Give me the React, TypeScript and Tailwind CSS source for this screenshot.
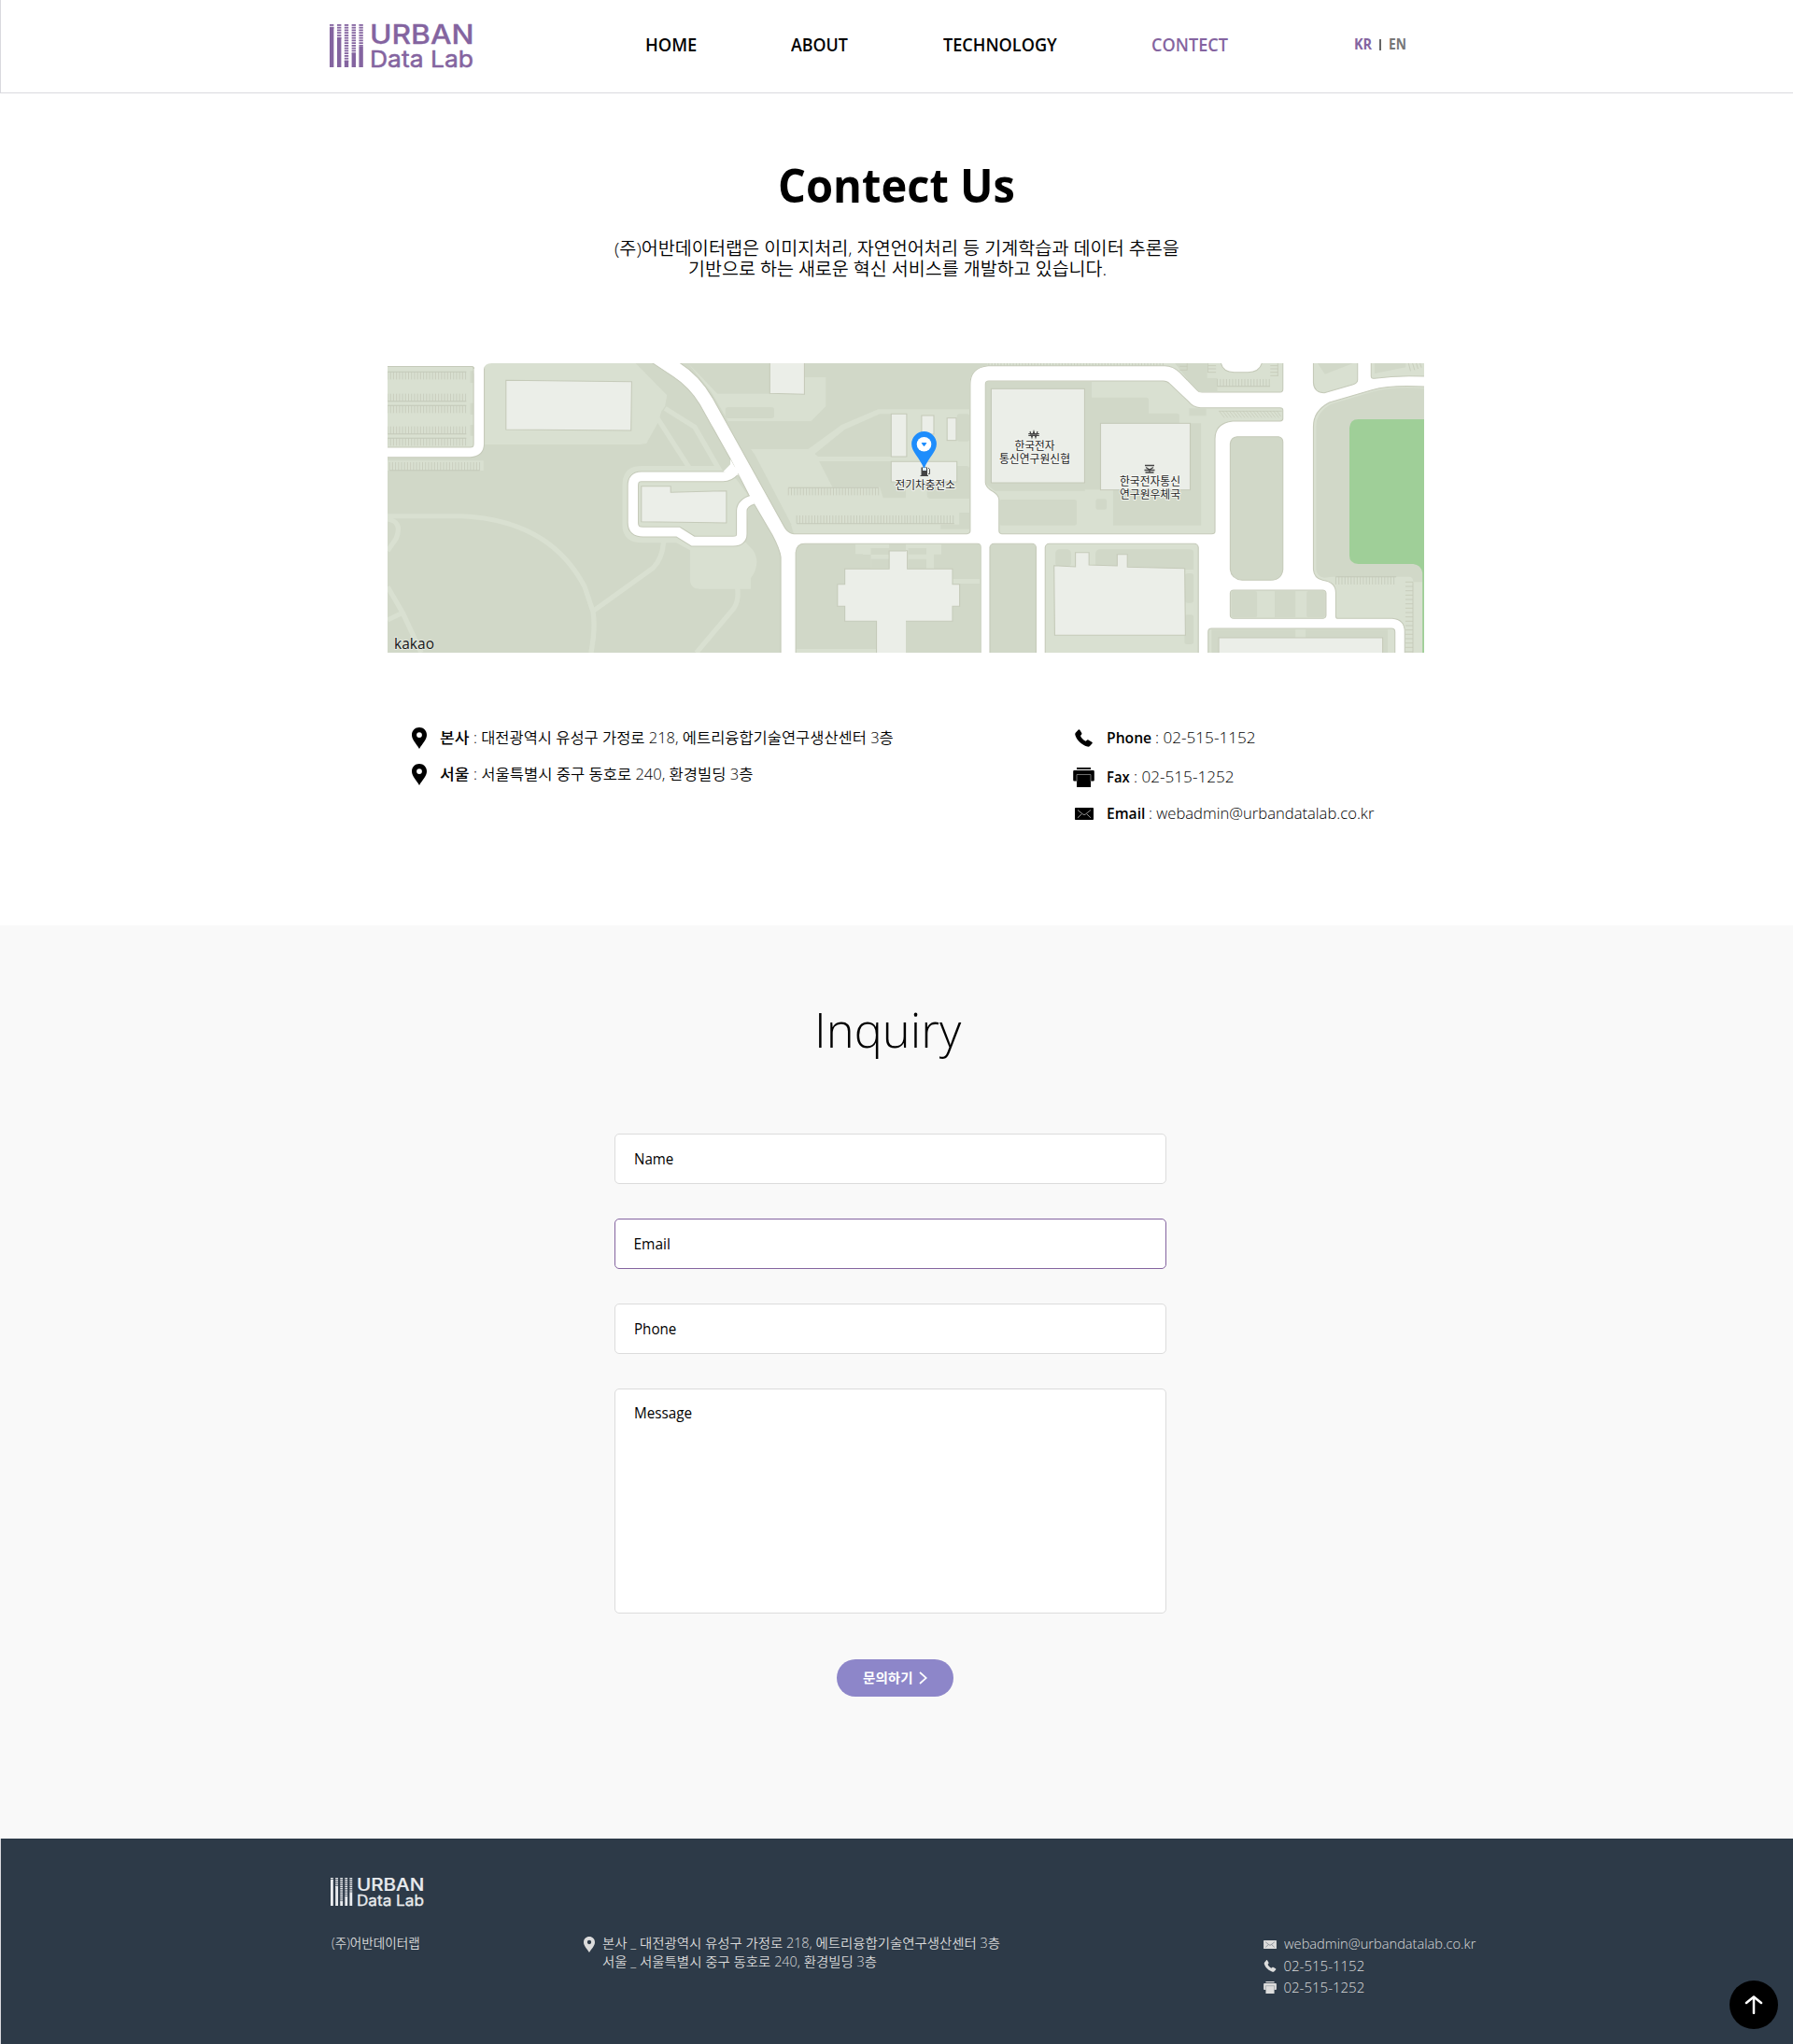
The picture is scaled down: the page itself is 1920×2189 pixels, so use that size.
import { useLayoutEffect, useRef, useState } from "react";

/* Text condensed or widened to fill the width of its box. */
function Fit({ className, children }: { className: string; children: string }) {
  const outer = useRef<HTMLSpanElement>(null);
  const inner = useRef<HTMLSpanElement>(null);
  const [scale, setScale] = useState(1);
  useLayoutEffect(() => {
    if (outer.current && inner.current) {
      setScale(outer.current.clientWidth / inner.current.offsetWidth);
    }
  }, []);
  return (
    <span ref={outer} className={`block shrink-0 whitespace-nowrap ${className}`}>
      <span ref={inner} className="inline-block origin-left align-top" style={{ transform: `scaleX(${scale})` }}>
        {children}
      </span>
    </span>
  );
}

const BARS = [
  { x: 0, solid: 3 },
  { x: 8, solid: 14 },
  { x: 15.8, solid: 39 },
  { x: 23.6, solid: 31.5 },
  { x: 31.4, solid: 24 },
];

function Logo({ className }: { className: string }) {
  return (
    <svg viewBox="0 0 154 46" className={`overflow-visible ${className}`} fill="currentColor" preserveAspectRatio="none">
      {BARS.map((b) => (
        <g key={b.x}>
          <rect x={b.x} y={b.solid} width="4.4" height={46 - b.solid} />
          {Array.from({ length: Math.ceil(b.solid / 2.75) }, (_, i) => (
            <rect key={i} x={b.x} y={i * 2.75} width="4.4" height="1.8" />
          ))}
        </g>
      ))}
      <g fontFamily="Inter, 'Liberation Sans', sans-serif" stroke="currentColor" strokeLinejoin="round">
        <text x="43" y="21" fontSize="28" fontWeight="500" strokeWidth="0.3" textLength="111.500" lengthAdjust="spacingAndGlyphs">
          URBAN
        </text>
        <text x="43" y="45.7" fontSize="24.5" fontWeight="400" strokeWidth="0.500" textLength="111" lengthAdjust="spacingAndGlyphs">
          Data Lab
        </text>
      </g>
    </svg>
  );
}

function Pin({ className }: { className: string }) {
  return (
    <svg viewBox="0 0 16 23" className={className} fill="currentColor" preserveAspectRatio="none">
      <path fillRule="evenodd" d="M8 0C3.5 0 0 3.5 0 8c0 5.400 4.600 9 8 15 3.400-6 8-9.600 8-15 0-4.500-3.500-8-8-8Zm0 5.200a2.900 2.900 0 1 1 0 5.800 2.900 2.900 0 0 1 0-5.800Z" />
    </svg>
  );
}

function Phone({ className }: { className: string }) {
  return (
    <svg viewBox="0 0 19 19" className={className} fill="currentColor">
      <path d="M1 3.500 3.800.5c.5-.5 1.100-.4 1.500.2l2 3.300c.3.500.2 1-.1 1.400L6 7.100c.8 2.200 3.200 4.600 5.600 5.700l1.600-1.300c.4-.3.900-.3 1.300-.1l3.800 2.300c.6.4.7 1 .2 1.500l-2.500 2.700c-.7.8-1.700.9-2.700.6C7.200 16.900 2 11.600.4 6.300.1 5.200.3 4.300 1 3.500Z" />
    </svg>
  );
}

function Printer({ className, line }: { className: string; line: string }) {
  return (
    <svg viewBox="0 0 23 21" className={className} fill="currentColor">
      <path d="M4 0h15v2H4zM1.500 3h20c.8 0 1.300.5 1.300 1.300v9c0 .8-.5 1.300-1.300 1.300H19V21H4v-6.400H1.500c-.8 0-1.300-.5-1.300-1.300v-9C.2 3.500.7 3 1.500 3Z" />
      <path d="M4 15V7.500h15V15" fill="none" stroke={line} strokeWidth="0.8" />
    </svg>
  );
}

function Mail({ className, line }: { className: string; line: string }) {
  return (
    <svg viewBox="0 0 20 13" className={className} fill="currentColor">
      <rect width="20" height="13" rx="0.8" />
      <path d="M3 2.500 8.600 7q1.400 1.100 2.800 0L17 2.500M3 10.800l4.300-4M17 10.800l-4.300-4" fill="none" stroke={line} strokeWidth="0.8" />
    </svg>
  );
}

/* A row of short parking-bay marks with an optional kerb line. */
function Bays({ x, y, w, h, step, kerb }: { x: number; y: number; w: number; h: number; step: number; kerb?: "top" | "bottom" }) {
  const marks = Array.from({ length: Math.floor(w / step) + 1 }, (_, i) => `M${x + i * step},${y}v${h}`).join("");
  const edge = kerb ? `M${x},${kerb === "top" ? y : y + h}h${w}` : "";
  return (
    <g fill="none" stroke="#c3c8b8">
      <path d={marks} strokeWidth="2.200" />
      <path d={edge} strokeWidth="3" />
    </g>
  );
}

const BASE = "#d1d8c8";
const PALE = "#d9e0d1";
const EDGE = "#c5cab9";
const BUILDING = "#ebeee8";

function MapWest() {
  const lane = "M14,313H262Q288,313 288,285V27";
  const loop = "M1060,362Q1045,391 1020,391H775Q750,391 750,420V540Q750,569 780,569H885L930,599H1050Q1076,599 1076,575V500Q1078,475 1110,465";
  return (
    <g transform="scale(.357143 .333333) translate(-14 -27)">
      <rect x="14" y="27" width="1560" height="930" fill={BASE} />
      <g fill={PALE}>
        <path d="M14,37H274V300H14ZM14,340H302V372H14Z" />
        <path d="M302,27H758L852,130L846,165L835,182L826,215L790,285L770,288H302Z" />
        <path d="M915,27L1003,125H1160V72H1328V165L1284,213H1035L985,120Z" />
        <path d="M1103,303H1275L1375,225L1485,175H1580V190H1490L1385,240L1295,318L1305,327H1580V342H1308L1348,425H1490L1500,460H1580V575H1232L1225,550Z" />
        <path d="M775,357H1000L1060,400L1100,460L1085,600L1110,628Q1135,670 1103,718V752H950Q921,752 921,720V628L880,604H780Q718,604 718,545V420Q718,357 775,357Z" />
        <path d="M1417,607H1518V688H1463V642H1439V688H1463V640H1417ZM1439,640H1463V688H1439ZM1238,945H1480V957H1238Z" />
      </g>
      <g fill={BASE}>
        <rect x="1027" y="168" width="146" height="36" rx="8" />
        <rect x="1463" y="621" width="56" height="21" />
        <rect x="1463" y="656" width="56" height="30" />
        <path d="M262,52H274V90H262ZM262,155H274V192H262ZM262,225H274V260H262Z" />
        <path d="M1103,303L1115,320L1225,545L1215,560L1095,320Z" />
      </g>
      <g fill="none" stroke={PALE} strokeWidth="15">
        <path d="M14,518H235Q500,530 605,745L630,825Q638,880 624,957" />
        <path d="M632,822L810,685Q838,655 842,600M1063,750Q1068,790 1052,815L940,957" />
        <path d="M846,172L935,232L1012,375M824,205L920,365M14,528Q60,535 40,590L14,630M14,745L60,830L115,957M14,852L60,828" />
      </g>
      <g fill="none">
        <path d={lane} stroke={EDGE} strokeWidth="35" />
        <path d={loop} stroke={EDGE} strokeWidth="35" />
      </g>
      <path
        d="M805,24L870,70Q920,105 950,160L1042,335L1097,450L1168,580Q1190,625 1193,650V965H1238V635Q1240,607 1265,607H1580V575H1232Q1215,573 1205,555L990,140Q950,65 888,24Z"
        fill="#fff"
        stroke={EDGE}
        strokeWidth="3"
      />
      <g fill="none" stroke="#fff" strokeWidth="29">
        <path d={lane} />
        <path d={loop} />
      </g>
      <path d="M14,27H290V60H274V45Q274,37 266,37H14Z" fill="#fff" />
      <path d="M14,37.500H266Q273,37.500 273,45" fill="none" stroke={EDGE} strokeWidth="3" />
      <path d="M302,48Q304,27 326,27H300Z" fill="#fff" />
      <path d="M1042,335V352L1020,376H1060L1060,370ZM1025,405L1065,385L1075,400L1060,375Z" fill="#fff" />
      <g fill={BUILDING} stroke={EDGE} strokeWidth="3">
        <path d="M369,82L746,86L744,243L369,240Z" />
        <path d="M775,422H863V442L1030,437V540L775,536Z" />
        <path d="M1160,20H1264V127L1160,124Z" />
        <path d="M1524,190H1580V327H1524ZM1524,343H1580V408H1524Z" />
        <path d="M1580,630H1518V688H1385V737H1363V808H1385V856H1480V965H1580Z" />
      </g>
      <g>
        <Bays x={14} y={55} w={236} h={24} step={9} kerb="top" />
        <Bays x={14} y={125} w={236} h={24} step={9} kerb="bottom" />
        <Bays x={14} y={163} w={236} h={24} step={9} kerb="top" />
        <Bays x={14} y={230} w={236} h={24} step={9} kerb="bottom" />
        <Bays x={14} y={268} w={236} h={24} step={9} kerb="top" />
        <Bays x={20} y={345} w={270} h={26} step={9} kerb="bottom" />
        <Bays x={1216} y={427} w={270} h={24} step={9} kerb="top" />
        <Bays x={1241} y={516} w={330} h={26} step={9} kerb="bottom" />
      </g>
    </g>
  );
}

function MapEast() {
  return (
    <g transform="translate(545 0) scale(.363573 .333333) translate(0 -27)" clipPath="url(#east)">
      <clipPath id="east">
        <rect x="27.500" y="27" width="1530" height="932" />
      </clipPath>
      <rect x="0" y="27" width="1557" height="932" fill="#fff" />
      <g fill={PALE} stroke={EDGE} strokeWidth="3">
        <path d="M0,20H1138V110Q1138,120 1130,120H900Q890,120 885,113L835,57Q815,35 790,35H270Q217,40 217,95V565Q217,575 207,575H0Z" />
        <path d="M272,84H785Q797,84 805,93L860,150Q872,168 895,170H1130Q1138,170 1138,178V205Q1138,213 1130,213H990Q938,220 938,270V567Q938,575 928,575H310Q302,575 302,565V465Q300,450 285,440Q262,425 262,410V95Q262,84 272,84Z" />
        <rect x="983" y="756" width="282" height="91" rx="10" />
        <path d="M1228,20V90Q1230,122 1260,122L1345,95Q1358,90 1358,80V20ZM1398,20V68Q1398,76 1408,76Q1480,64 1565,70V20Z" />
        <path d="M1565,103Q1460,95 1400,113L1275,153Q1228,180 1228,230V690Q1230,718 1255,724Q1294,730 1294,765V840Q1294,847 1300,847H1460Q1497,850 1497,890V965H1565Z" />
        <path d="M918,965V890Q918,879 928,879H1458Q1468,879 1468,890V965Z" />
        <path d="M0,607H238Q248,607 248,617V965H0Z" />
        <rect x="438" y="607" width="451" height="370" rx="12" />
      </g>
      <g fill={BASE} stroke={EDGE} strokeWidth="3">
        <path d="M1003,263H1125Q1138,265 1138,280V690Q1134,724 1102,724H1018Q986,720 983,690V285Q985,265 1003,263Z" />
        <rect x="275" y="607" width="136" height="370" rx="12" />
      </g>
      <g fill={BASE}>
        <path d="M0,24H268V34Q217,42 216,90V175H0Z" />
        <rect x="178" y="190" width="37" height="88" rx="8" />
        <path d="M178,357H205Q215,357 215,367V462H100Q90,462 90,450V408H178ZM185,507H215V560H130V545H185Z" />
        <path d="M264,86H575V137H735Q743,137 743,145V188H825Q833,188 833,196V220H897V548H638V433H555V437H290L264,415Z" />
        <rect x="302" y="465" width="229" height="83" rx="8" />
        <rect x="587" y="463" width="32" height="34" rx="6" />
        <path d="M862,172H912V196H862Z" />
        <path d="M820,27H915V75H945V120H892L862,85Z" />
        <path d="M1240,27H1345L1262,62ZM1408,27H1500V40L1408,60Z" />
        <path d="M1557,108Q1470,100 1405,118L1280,158Q1236,185 1236,230V690Q1238,712 1260,716L1285,713H1510Q1522,713 1522,730H1557Z" />
        <rect x="986" y="759" width="76" height="85" rx="6" />
        <rect x="1114" y="759" width="61" height="85" />
        <rect x="1208" y="759" width="54" height="85" rx="6" />
        <path d="M928,883H1175V909H948V957H928ZM1205,883H1447V957H1432V909H1205Z" />
        <path d="M35,621H88V641H35ZM35,656H88V688H35ZM132,609H246V720H166V688H110V641H132ZM166,735H246V957H22V856H166Z" />
        <rect x="468" y="625" width="46" height="56" rx="12" />
        <path d="M600,625H863Q875,625 875,635V690H586V640Q586,625 600,625Z" />
        <rect x="850" y="702" width="25" height="95" rx="8" />
        <rect x="848" y="835" width="27" height="95" rx="8" />
      </g>
      <path d="M955,24Q960,56 995,56H1035Q1070,56 1077,24Z" fill="#fff" stroke={EDGE} strokeWidth="3" />
      <path d="M1360,207H1557V960H1549V700Q1545,675 1522,672H1360Q1334,670 1334,645V235Q1336,207 1360,207Z" fill="#9fcf98" />
      <g fill={BUILDING} stroke={EDGE} strokeWidth="3">
        <path d="M-12,190H30V327H-12M-12,343H178V408H-12" />
        <rect x="74" y="195" width="36" height="60" />
        <rect x="149" y="203" width="27" height="72" />
        <path d="M-12,629H32V688H165V737H186V808H165V856H22V965H-12" />
        <rect x="279" y="109" width="275" height="302" />
        <rect x="601" y="220" width="264" height="214" />
        <path d="M464,677L527,681V635H567V675L650,678V641H680V682L849,686L851,901H466Z" />
        <path d="M949,965V909H1432V965" />
      </g>
      <g>
        <Bays x={5} y={516} w={165} h={26} step={9} kerb="bottom" />
        <Bays x={272} y={27} w={520} h={7} step={9} />
        <Bays x={945} y={78} w={155} h={23} step={9} kerb="bottom" />
        <Bays x={1294} y={713} w={178} h={25} step={9} kerb="top" />
        <path d="M950,180l16,22m-6,-22l16,22m-6,-22l16,22m-6,-22l16,22m-6,-22l16,22m-6,-22l16,22m-6,-22l16,22m-6,-22l16,22m-6,-22l16,22m-6,-22l16,22m-6,-22l16,22m-6,-22l16,22m-6,-22l16,22m-6,-22l16,22m-6,-22l16,22m-6,-22l16,22m-6,-22l16,22m-6,-22l12,18M950,181H1135" stroke={EDGE} strokeWidth="2" fill="none" />
        <path
          d="M1499,730h22m-22,14h22m-22,14h22m-22,14h22m-22,14h22m-22,14h22m-22,14h22m-22,14h22m-22,14h22m-22,14h22m-22,14h22m-22,14h22m-22,14h22m-22,14h22m-22,14h22m-22,14h22m-22,14h22M1521,730V957M917,27v30m0,-22h24m-24,10h24m-24,11h24M1123,27v42m0,-34h-22m22,10h-22m22,11h-22m22,11h-22M834,37h22m-22,12h22V27M1508,27l6,25m6,-25l6,22m5,-22l5,18m6,-18l4,14"
          stroke={EDGE}
          strokeWidth="2.500"
          fill="none"
        />
      </g>
    </g>
  );
}

function MapView() {
  return (
    <svg viewBox="0 0 1110 310" className="block h-[310px] w-[1110px]">
      <MapWest />
      <MapEast />
      <g
        fontFamily="'Noto Sans CJK KR', sans-serif"
        fontSize="12"
        fontWeight="400"
        fill="#222"
        stroke="#f4f6f2"
        strokeWidth="2"
        strokeLinejoin="round"
        paintOrder="stroke"
      >
        <text x="543.500" y="134.500" textLength="64.500" lengthAdjust="spacingAndGlyphs">전기차충전소</text>
        <text x="671.500" y="93" textLength="43" lengthAdjust="spacingAndGlyphs">한국전자</text>
        <text x="655" y="107" textLength="76" lengthAdjust="spacingAndGlyphs">통신연구원신협</text>
        <text x="784" y="131" textLength="65" lengthAdjust="spacingAndGlyphs">한국전자통신</text>
        <text x="784" y="145" textLength="65" lengthAdjust="spacingAndGlyphs">연구원우체국</text>
      </g>
      <g stroke="#444" fill="none">
        <path d="m688 73 2 6.500 2-6.500 2 6.500 2-6.500M686.300 75.500h11.500M686.300 77.300h11.500" strokeWidth="1.200" />
        <path d="M811 109.500h10M812 111.500l4 2.500 4-2.500M810.500 114.500h11M816 114v3M811.500 117h9" strokeWidth="1.300" />
        <path d="M579 112l1.500 1.500v5h-1.500" strokeWidth="0.900" />
      </g>
      <path d="M571.500 111.500h6.500v8.500h1v1h-8.500v-1h1z" fill="#444" />
      <path d="M574.500 73a13.400 13.400 0 0 0-13.400 13.400c0 8.600 8.400 13.600 13.400 26.600 5-13 13.400-18 13.400-26.600A13.400 13.400 0 0 0 574.500 73Z" fill="#1e8dfc" />
      <circle cx="574.500" cy="86.800" r="7.800" fill="#fff" />
      <path d="M572.200 85.500h4.600l-2.300 3.200z" fill="#1e8dfc" stroke="#1e8dfc" strokeLinejoin="round" />
      <path d="M573 112h4v3h-4z" fill="#dff0ff" />
      <text x="7" y="305.500" fontFamily="'Noto Sans', sans-serif" fontSize="17" fill="#1c1c1c" stroke="#e8ece4" strokeWidth="1.500" paintOrder="stroke" textLength="43" lengthAdjust="spacingAndGlyphs">
        kakao
      </text>
    </svg>
  );
}

function Header() {
  return (
    <header className="flex h-[100px] items-start border-b border-l border-[#d9d9de] bg-white text-[19px] leading-[28px] font-[650] text-black">
      <Logo className="mt-[26px] ml-[352px] h-[46px] w-[154px] shrink-0 text-[#8464a0]" />
      <nav className="mt-[34px] ml-[184px] flex">
        <Fit className="w-[55px]">HOME</Fit>
        <Fit className="ml-[101px] w-[61px]">ABOUT</Fit>
        <Fit className="ml-[102px] w-[122px]">TECHNOLOGY</Fit>
        <Fit className="ml-[101px] w-[82px] text-[#8464a0]">CONTECT</Fit>
      </nav>
      <div className="mt-[33px] ml-[135px] flex text-[16px] font-bold">
        <Fit className="w-[19px] text-[#8464a0]">KR</Fit>
        <span className="mt-[9px] ml-[8px] h-[12px] w-[1.500px] bg-[#666]" />
        <Fit className="ml-[8.500px] w-[19px] text-[#777]">EN</Fit>
      </div>
    </header>
  );
}

function Contact() {
  return (
    <section className="h-[891px] bg-white text-black">
      <h1 className="flex justify-center pt-[63px] text-[50px] leading-[70px] font-bold">
        <Fit className="w-[254px]">Contect Us</Fit>
      </h1>
      <div className="mt-[22px] flex flex-col items-center pl-px text-[19px] leading-[22px] font-[350]">
        <Fit className="w-[605px]">(주)어반데이터랩은 이미지처리, 자연언어처리 등 기계학습과 데이터 추론을</Fit>
        <Fit className="w-[448px]">기반으로 하는 새로운 혁신 서비스를 개발하고 있습니다.</Fit>
      </div>
      <div className="mt-[90px] ml-[415px]">
        <MapView />
      </div>
      <div className="mt-[78px] ml-[441px] flex text-[16px] leading-[26px] font-[350]">
        <div className="flex w-[708px] flex-col gap-[13px]">
          <div className="flex">
            <Pin className="mt-[2px] mr-[14px] h-[23px] w-[16px]" />
            <Fit className="w-[31px] font-medium">본사</Fit>
            <Fit className="ml-[5px] w-[450px]">: 대전광역시 유성구 가정로 218, 에트리융합기술연구생산센터 3층</Fit>
          </div>
          <div className="flex">
            <Pin className="mt-[2px] mr-[14px] h-[23px] w-[16px]" />
            <Fit className="w-[31px] font-medium">서울</Fit>
            <Fit className="ml-[5px] w-[300px]">: 서울특별시 중구 동호로 240, 환경빌딩 3층</Fit>
          </div>
        </div>
        <div className="flex flex-col">
          <div className="flex h-[42px]">
            <Phone className="mt-[4px] mr-[15px] ml-[2px] size-[19px]" />
            <Fit className="w-[48px] font-semibold">Phone</Fit>
            <Fit className="ml-[4px] w-[107px]">: 02-515-1152</Fit>
          </div>
          <div className="flex h-[39px]">
            <Printer className="mt-[3px] mr-[13px] h-[21px] w-[23px]" line="#888" />
            <Fit className="w-[25px] font-semibold">Fax</Fit>
            <Fit className="ml-[4px] w-[107px]">: 02-515-1252</Fit>
          </div>
          <div className="flex">
            <Mail className="mt-[7px] mr-[14px] ml-[2px] h-[13px] w-[20px]" line="#bbb" />
            <Fit className="w-[41px] font-semibold">Email</Fit>
            <Fit className="ml-[4px] w-[241px]">: webadmin@urbandatalab.co.kr</Fit>
          </div>
        </div>
      </div>
    </section>
  );
}

function Inquiry() {
  return (
    <section className="h-[978px] bg-[#f9f9f9] pl-[658px] text-black">
      <h2 className="pt-[76px] pl-[214px] text-[51px] leading-[70px] font-[330]">
        <Fit className="w-[157px]">Inquiry</Fit>
      </h2>
      <form className="mt-[77px] flex w-[591px] flex-col gap-[37px] text-[15.500px] leading-[26px] font-[380]">
        <div className="h-[54px] rounded-[5px] border border-[#dcdcdc] bg-white pt-[13px] pl-[19.500px]">
          <Fit className="w-[42px]">Name</Fit>
        </div>
        <div className="h-[54px] rounded-[5px] border border-[#8464a0] bg-white pt-[13px] pl-[19.500px]">
          <Fit className="w-[39px]">Email</Fit>
        </div>
        <div className="h-[54px] rounded-[5px] border border-[#dcdcdc] bg-white pt-[13px] pl-[19.500px]">
          <Fit className="w-[45px]">Phone</Fit>
        </div>
        <div className="h-[241px] rounded-[5px] border border-[#dcdcdc] bg-white pt-[12px] pl-[19.500px]">
          <Fit className="w-[62px]">Message</Fit>
        </div>
      </form>
      <button type="button" className="mt-[49px] ml-[238px] flex h-[40px] w-[125px] items-center rounded-full bg-[#8d86c9] pl-[27px] text-[14px] leading-[26px] font-bold text-white">
        <Fit className="w-[54px]">문의하기</Fit>
        <svg viewBox="0 0 9 14" className="ml-[7px] h-[14px] w-[9px]" fill="none" stroke="currentColor" strokeWidth="1.700">
          <path d="m1 1 6.800 6L1 13" />
        </svg>
      </button>
    </section>
  );
}

function Footer() {
  return (
    <footer className="relative flex h-[220px] border-l border-[#d9d9de] bg-[#2d3a48] text-[14px] leading-[20px] font-[350] text-[#dcdcdc]">
      <div className="ml-[353px] w-[271px]">
        <Logo className="mt-[42px] h-[30px] w-[100px] text-[#e9ebee]" />
        <Fit className="mt-[30px] ml-px w-[95px]">(주)어반데이터랩</Fit>
      </div>
      <div className="mt-[102px] flex w-[728px]">
        <Pin className="mt-[3px] mr-[8px] h-[17px] w-[12px] shrink-0 text-[#dcdcdc]" />
        <div>
          <Fit className="w-[426px]">본사 _ 대전광역시 유성구 가정로 218, 에트리융합기술연구생산센터 3층</Fit>
          <Fit className="w-[294px]">서울 _ 서울특별시 중구 동호로 240, 환경빌딩 3층</Fit>
        </div>
      </div>
      <div className="mt-[101px] text-[15px] leading-[23px]">
        <div className="flex">
          <Mail className="mt-[8px] mr-[7.500px] h-[9px] w-[14px]" line="#56616c" />
          <Fit className="w-[205px]">webadmin@urbandatalab.co.kr</Fit>
        </div>
        <div className="mt-px flex">
          <Phone className="mt-[5px] mr-[7.500px] h-[13px] w-[14px]" />
          <Fit className="w-[87px]">02-515-1152</Fit>
        </div>
        <div className="flex">
          <Printer className="mt-[5px] mr-[7.500px] h-[13px] w-[14px]" line="#7d868e" />
          <Fit className="w-[87px]">02-515-1252</Fit>
        </div>
      </div>
      <button type="button" aria-label="Back to top" className="absolute right-[16px] bottom-[16px] flex size-[52px] items-center justify-center rounded-full bg-black text-white">
        <svg viewBox="0 0 20 20" className="size-[20px]" fill="none" stroke="currentColor" strokeWidth="2.500" strokeLinecap="round" strokeLinejoin="round">
          <path d="M10 19V1.500M2 8l8-6.500L18 8" />
        </svg>
      </button>
    </footer>
  );
}

export default function App() {
  return (
    <div className="w-[1920px] overflow-hidden bg-white font-['Open_Sans','Noto_Sans_CJK_KR',sans-serif]">
      <Header />
      <Contact />
      <Inquiry />
      <Footer />
    </div>
  );
}
